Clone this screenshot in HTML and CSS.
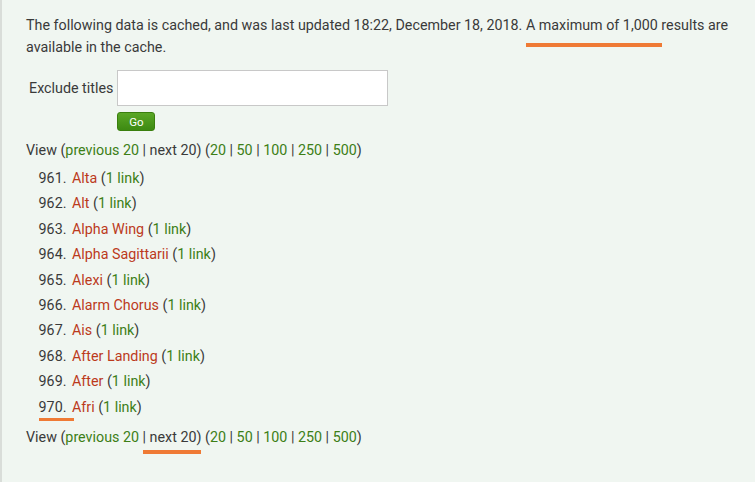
FILE: index.html
```html
<!doctype html>
<html lang="en">
<head>
  <meta charset="utf-8" />
  <title>Unused categories</title>
  <link rel="stylesheet" href="styles.css">
</head>
<body>
  <div class="content">
    <p class="cache-note">The following data is cached, and was last updated 18:22, December 18, 2018. <span class="mark mark-max">A maximum of 1,000</span> results are available in the cache.</p>

    <form class="filter">
      <div class="filter-row">
        <label for="exclude">Exclude titles</label>
        <div class="filter-fields">
          <input id="exclude" type="text" />
          <button type="button" class="go">Go</button>
        </div>
      </div>
    </form>

    <div class="pager">View (<a class="ok" href="#">previous 20</a> | next 20) (<a class="ok" href="#">20</a> | <a class="ok" href="#">50</a> | <a class="ok" href="#">100</a> | <a class="ok" href="#">250</a> | <a class="ok" href="#">500</a>)</div>

    <ol class="results" start="961">
      <li><a class="new" href="#">Alta</a> (<a class="ok" href="#">1 link</a>)</li>
      <li><a class="new" href="#">Alt</a> (<a class="ok" href="#">1 link</a>)</li>
      <li><a class="new" href="#">Alpha Wing</a> (<a class="ok" href="#">1 link</a>)</li>
      <li><a class="new" href="#">Alpha Sagittarii</a> (<a class="ok" href="#">1 link</a>)</li>
      <li><a class="new" href="#">Alexi</a> (<a class="ok" href="#">1 link</a>)</li>
      <li><a class="new" href="#">Alarm Chorus</a> (<a class="ok" href="#">1 link</a>)</li>
      <li><a class="new" href="#">Ais</a> (<a class="ok" href="#">1 link</a>)</li>
      <li><a class="new" href="#">After Landing</a> (<a class="ok" href="#">1 link</a>)</li>
      <li><a class="new" href="#">After</a> (<a class="ok" href="#">1 link</a>)</li>
      <li class="last"><span class="num-mark"></span><a class="new" href="#">Afri</a> (<a class="ok" href="#">1 link</a>)</li>
    </ol>

    <div class="pager pager-bottom">View (<a class="ok" href="#">previous 20</a> <span class="mark mark-next">| next 20)</span> (<a class="ok" href="#">20</a> | <a class="ok" href="#">50</a> | <a class="ok" href="#">100</a> | <a class="ok" href="#">250</a> | <a class="ok" href="#">500</a>)</div>
  </div>
</body>
</html>
```

FILE: styles.css
```css
:root{
  --bg:#f0f6f1;
  --text:#3a3a3a;
  --ok:#3d7f17;
  --new:#bc3a1c;
  --mark:#ef7a35;
}

/* ───────────── base ───────────── */
body{
  margin:0;
  min-height:482px;
  background:var(--bg);
  border-left:2px solid #d9ddd9;
  font-family:Roboto,"Noto Sans",sans-serif;
  font-size:14.3px;
  color:var(--text);
}
a{ text-decoration:none; }
a.ok{ color:var(--ok); }
a.new{ color:var(--new); }

.content{
  padding:14px 20px 0 24px;
}

/* ───────────── cache note ───────────── */
.cache-note{
  margin:0;
  line-height:22px;
}
.mark{ position:relative; }
.mark:after{
  content:"";
  position:absolute;
  height:4px;
  background:var(--mark);
}
.mark-max:after{ left:0; right:-4px; bottom:-14px; }
.mark-next:after{ left:0; right:0; bottom:-9px; }

/* ───────────── filter form ───────────── */
.filter{ margin:12px 0 0; }
.filter-row{
  display:flex;
  align-items:flex-start;
}
.filter-row label{
  padding:10px 4px 0 3px;
}
.filter-fields{
  display:flex;
  flex-direction:column;
  align-items:flex-start;
  gap:6px;
}
.filter-fields input{
  width:271px;
  height:36px;
  box-sizing:border-box;
  border:1px solid #c8c8c8;
  background:#fff;
  margin:0;
}
.go{
  width:38px;
  height:19px;
  padding:0;
  border:1px solid #3a7f0e;
  border-radius:3px;
  background:linear-gradient(#5aa726,#3d8a12);
  color:#fff;
  font-family:Roboto,"Noto Sans",sans-serif;
  font-size:11.5px;
}

/* ───────────── results ───────────── */
.pager{
  margin-top:8px;
  line-height:22px;
}
.pager-bottom{ margin-top:6px; }
.results{
  margin:5px 0 0;
  padding-left:44px;
}
.results li{
  line-height:25.4px;
  padding-left:2px;
}
.results li.last{ position:relative; }
.num-mark{
  position:absolute;
  left:-31px;
  bottom:-1px;
  width:35px;
  height:3px;
  background:var(--mark);
}
```
